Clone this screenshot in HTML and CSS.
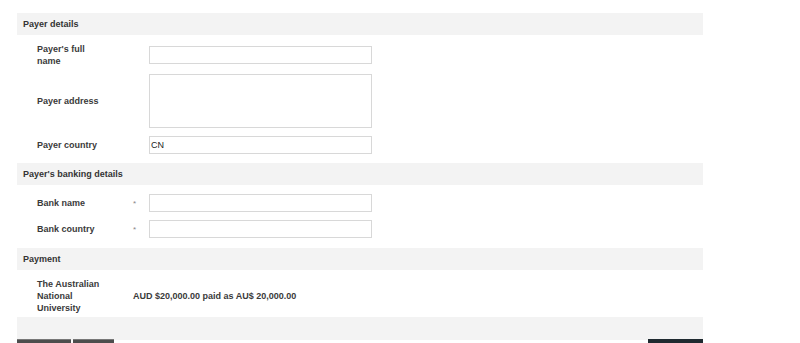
FILE: index.html
```html
<!DOCTYPE html>
<html lang="en">

<head>
    <meta charset="UTF-8">
    <meta name="viewport" content="width=device-width, initial-scale=1.0">
    <title>Payer details</title>
    <link rel="stylesheet" href="styles.css">
</head>

<body>
    <div class="wrap">
        <div class="sec-head">Payer details</div>
        <div class="sec-body">
            <div class="row">
                <div class="label">Payer's full name</div>
                <div class="star"></div>
                <input class="field" type="text" value="">
            </div>
            <div class="row">
                <div class="label">Payer address</div>
                <div class="star"></div>
                <textarea class="field area"></textarea>
            </div>
            <div class="row">
                <div class="label">Payer country</div>
                <div class="star"></div>
                <input class="field" type="text" value="CN">
            </div>
        </div>

        <div class="sec-head">Payer's banking details</div>
        <div class="sec-body bank">
            <div class="row">
                <div class="label">Bank name</div>
                <div class="star">*</div>
                <input class="field" type="text" value="">
            </div>
            <div class="row">
                <div class="label">Bank country</div>
                <div class="star">*</div>
                <input class="field" type="text" value="">
            </div>
        </div>

        <div class="sec-head">Payment</div>
        <div class="sec-body pay">
            <div class="row">
                <div class="label">The Australian National University</div>
                <div class="value">AUD $20,000.00 paid as AU$ 20,000.00</div>
            </div>
        </div>

        <div class="foot"></div>

        <div class="btns">
            <div class="left">
                <button class="btn grey wide"></button>
                <button class="btn grey"></button>
            </div>
            <button class="btn dark"></button>
        </div>
    </div>
</body>

</html>
```

FILE: styles.css
```css
* {
    margin: 0;
    padding: 0;
    box-sizing: border-box;
}

body {
    background: #fff;
    font-family: "Liberation Sans", Arial, sans-serif;
    font-size: 9px;
    color: #3a3a3a;
}

.wrap {
    width: 686px;
    margin: 13px 0 0 17px;
}

.sec-head {
    height: 22px;
    line-height: 22px;
    padding-left: 6px;
    background: #f3f3f3;
    color: #333;
    font-weight: bold;
}

.sec-body {
    display: flex;
    flex-direction: column;
    gap: 8px;
    padding: 8px 0 9px 20px;
}

/* first row has a two-line label, so it sits a bit tighter */
.sec-body .row:first-child {
    margin-bottom: -1px;
}

.sec-body.bank {
    gap: 8px;
    padding: 9px 0 10px 20px;
}

.sec-body.bank .row:first-child {
    margin-bottom: 0;
}

.sec-body.pay {
    padding: 8px 0 4px 20px;
}

.row {
    display: flex;
    align-items: center;
}

.label {
    width: 96px;
    padding-right: 24px;
    font-weight: bold;
    line-height: 12px;
    color: #3a3a3a;
}

.star {
    width: 16px;
    color: #888;
    font-size: 8px;
}

.field {
    width: 223px;
    height: 18px;
    border: 1px solid #d8d8d8;
    background: #fff;
    font-family: "Liberation Sans", Arial, sans-serif;
    font-size: 9px;
    color: #222;
    padding: 0 1px;
    outline: none;
}

.field.area {
    height: 54px;
    resize: none;
}

.value {
    font-weight: bold;
    color: #3a3a3a;
}

.foot {
    height: 23px;
    background: #f3f3f3;
}

.btns {
    display: flex;
    justify-content: space-between;
    margin-top: -1px;
}

.btns .left {
    display: flex;
    gap: 2px;
}

.btn {
    height: 20px;
    border: none;
}

.btn.grey {
    width: 41px;
    background: #4d4d4d;
    border-top: 1px solid #777;
}

.btn.grey.wide {
    width: 54px;
}

.btn.dark {
    width: 55px;
    background: #1f2a30;
}
```
